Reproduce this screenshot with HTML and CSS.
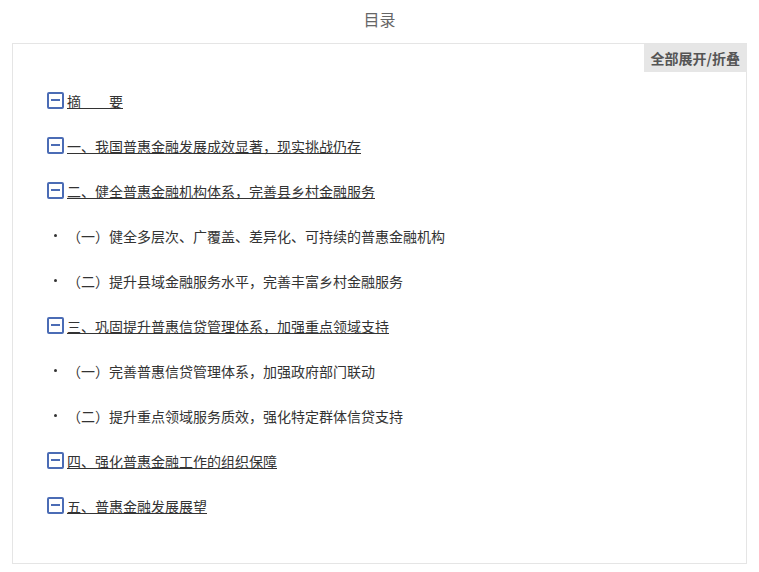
FILE: index.html
```html
<!DOCTYPE html>
<html lang="zh-CN">
<head>
  <meta charset="UTF-8" />
  <title>目录</title>
  <link rel="stylesheet" href="styles.css">
</head>
<body>
  <h2 class="title">目录</h2>

  <div class="toc">
    <div class="toolbar">
      <button class="toggle-all">全部展开/折叠</button>
    </div>

    <ul class="toc-list">
      <li class="item head"><span class="fold"></span><a href="#">摘&emsp;&emsp;要</a></li>
      <li class="item head"><span class="fold"></span><a href="#">一、我国普惠金融发展成效显著，现实挑战仍存</a></li>
      <li class="item head"><span class="fold"></span><a href="#">二、健全普惠金融机构体系，完善县乡村金融服务</a></li>
      <li class="item sub"><span class="dot"></span>（一）健全多层次、广覆盖、差异化、可持续的普惠金融机构</li>
      <li class="item sub"><span class="dot"></span>（二）提升县域金融服务水平，完善丰富乡村金融服务</li>
      <li class="item head"><span class="fold"></span><a href="#">三、巩固提升普惠信贷管理体系，加强重点领域支持</a></li>
      <li class="item sub"><span class="dot"></span>（一）完善普惠信贷管理体系，加强政府部门联动</li>
      <li class="item sub"><span class="dot"></span>（二）提升重点领域服务质效，强化特定群体信贷支持</li>
      <li class="item head"><span class="fold"></span><a href="#">四、强化普惠金融工作的组织保障</a></li>
      <li class="item head"><span class="fold"></span><a href="#">五、普惠金融发展展望</a></li>
    </ul>
  </div>
</body>
</html>
```

FILE: styles.css
```css
* {
  box-sizing: border-box;
}

body {
  margin: 0;
  padding: 0 12px;
  background: #fff;
  font-family: "Microsoft YaHei", "Noto Sans CJK SC", "Noto Sans", sans-serif;
  color: #333;
}

.title {
  margin: 0 0 13px;
  padding-top: 8px;
  font-size: 16px;
  line-height: 22px;
  font-weight: normal;
  text-align: center;
  color: #666;
}

.toc {
  height: 521px;
  border: 1px solid #e5e5e5;
}

.toolbar {
  display: flex;
  justify-content: flex-end;
}

.toggle-all {
  height: 28px;
  padding: 0 7px;
  margin-right: -1px;
  border: none;
  background: #e6e6e6;
  color: #555;
  font-family: inherit;
  font-size: 14px;
  font-weight: bold;
  cursor: pointer;
}

.toc-list {
  list-style: none;
  margin: 0;
  padding: 6px 0 0 34px;
}

.item {
  display: flex;
  align-items: center;
  height: 45px;
  font-size: 14px;
}

.item a {
  color: #333;
  text-decoration: underline;
}

.fold {
  position: relative;
  width: 17px;
  height: 17px;
  margin-right: 3px;
  border: 2px solid #4b6cb5;
  border-radius: 2px;
}

.fold::after {
  content: "";
  position: absolute;
  left: 2px;
  right: 2px;
  top: 5px;
  height: 2px;
  background: #4b6cb5;
}

.dot {
  width: 17px;
  margin-right: 3px;
  display: flex;
  justify-content: center;
}

.dot::before {
  content: "";
  width: 3px;
  height: 3px;
  border-radius: 50%;
  background: #333;
}
```
